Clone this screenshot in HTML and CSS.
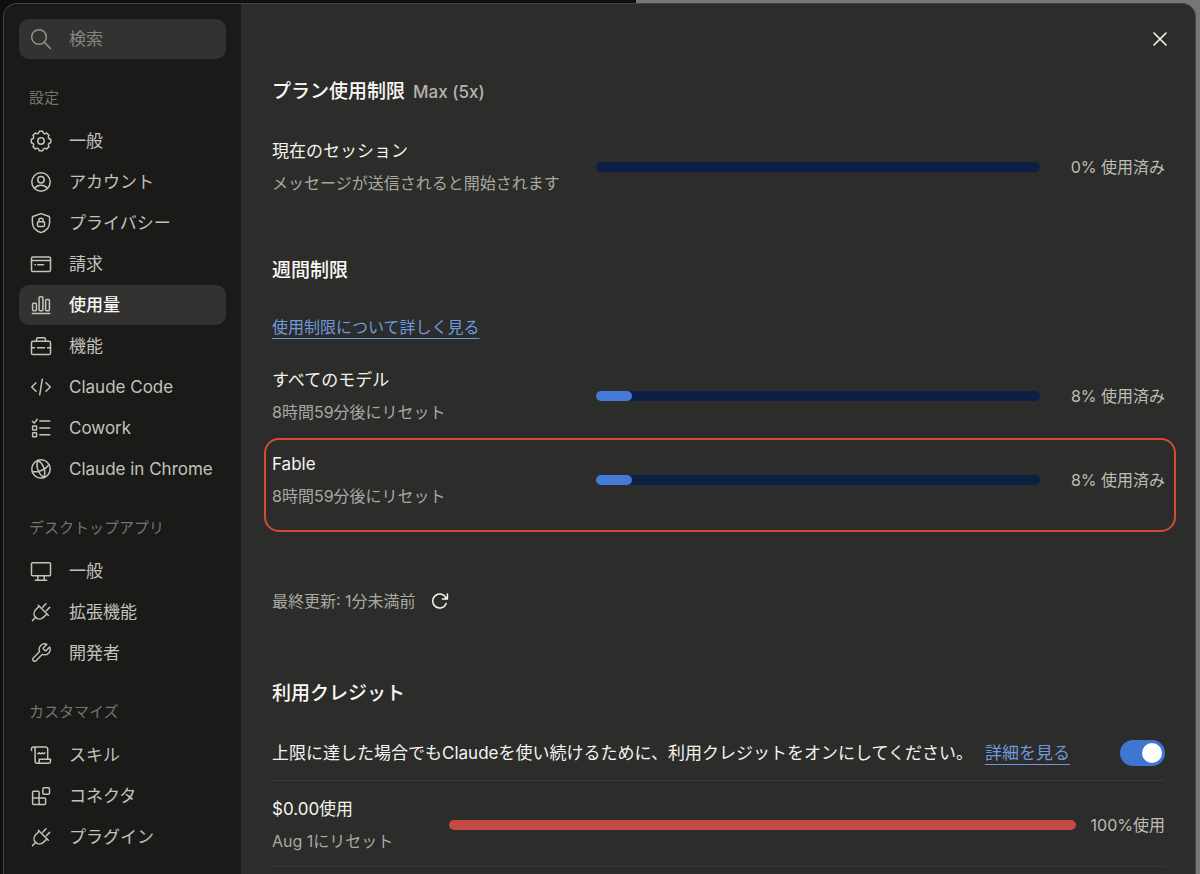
FILE: index.html
```html
<!DOCTYPE html>
<html lang="ja">
<head>
    <meta charset="UTF-8">
    <meta name="viewport" content="width=device-width, initial-scale=1.0">
    <title>設定 - 使用量</title>
    <link rel="stylesheet" href="styles.css">
</head>
<body>
    <svg class="sprite" aria-hidden="true">
        <symbol id="plug" viewBox="0 0 22 22">
            <path d="M8.3 4.2L18.3 14.2M12.7 6.2L16 2.8M16.3 9.8L19.7 6.4M9.2 5.2L5.6 8.7C3.5 11 3.5 14.3 5.6 16.4C7.7 18.5 11 18.5 13.3 16.4L17 13M5.6 16.4L2.5 19.6"/>
        </symbol>
    </svg>

    <div class="dialog" role="dialog" aria-label="設定">
        <nav class="sidebar">
            <label class="search">
                <svg class="icon" viewBox="0 0 22 22"><circle cx="9" cy="9" r="7.3"/><path d="M14.3 14.3L20.5 20.5"/></svg>
                <input type="search" placeholder="検索" aria-label="検索">
            </label>

            <h3 class="nav-label">設定</h3>
            <div class="nav-group">
                <a href="#" class="nav-item">
                    <svg class="icon" viewBox="0 0 22 22"><path d="M9.3 1.3H12.7Q13.2 3.3 14.1 3.6Q15.2 3.9 16.6 3L19 5.4Q18 6.9 18.4 7.9Q18.8 8.9 20.7 9.3V12.7Q18.8 13.1 18.4 14.1Q18 15.1 19 16.6L16.6 19Q15.2 18.1 14.1 18.4Q13.2 18.8 12.7 20.7H9.3Q8.8 18.8 7.9 18.4Q6.8 18.1 5.4 19L3 16.6Q4 15.1 3.6 14.1Q3.2 13.1 1.3 12.7V9.3Q3.2 8.9 3.6 7.9Q4 6.9 3 5.4L5.4 3Q6.8 3.9 7.9 3.6Q8.8 3.3 9.3 1.3Z"/><circle cx="11" cy="11" r="3.2"/></svg>
                    一般
                </a>
                <a href="#" class="nav-item">
                    <svg class="icon" viewBox="0 0 22 22"><circle cx="11" cy="11" r="9.2"/><circle cx="11" cy="8.7" r="3.2"/><path d="M4.6 17.3Q7 14.3 11 14.3T17.4 17.3"/></svg>
                    アカウント
                </a>
                <a href="#" class="nav-item">
                    <svg class="icon" viewBox="0 0 22 22"><path d="M11 1.6L18.6 4.2Q19.6 4.6 19.6 5.6V10.5C19.6 15.5 16.5 18.8 11 20.6C5.5 18.8 2.4 15.5 2.4 10.5V5.6Q2.4 4.6 3.4 4.2Z"/><rect x="7.5" y="9.8" width="7" height="4.8" rx="1"/><path d="M8.9 9.8V8.4A2.1 2.1 0 0 1 13.1 8.4V9.8"/></svg>
                    プライバシー
                </a>
                <a href="#" class="nav-item">
                    <svg class="icon" viewBox="0 0 22 22"><rect x="1.5" y="4" width="19" height="14.6" rx="1.3"/><path d="M1.5 7.4H20.5M4.9 11.7H5.4M7.7 11.7H13.5"/></svg>
                    請求
                </a>
                <a href="#" class="nav-item active" aria-current="page">
                    <svg class="icon" viewBox="0 0 22 22"><rect x="2.6" y="9.3" width="3.8" height="7.4" rx="1"/><rect x="9.1" y="2.7" width="3.8" height="14" rx="1"/><rect x="15.6" y="5.4" width="3.8" height="11.3" rx="1"/><path d="M2.3 19.5H19.8"/></svg>
                    使用量
                </a>
                <a href="#" class="nav-item">
                    <svg class="icon" viewBox="0 0 22 22"><rect x="1.5" y="6.3" width="19" height="13.2" rx="1.6"/><path d="M6.5 6.3V4.3Q6.5 2.8 8 2.8H14Q15.5 2.8 15.5 4.3V6.3M1.5 12.7H4.5M7.5 12.7H14.5M17.5 12.7H20.5"/></svg>
                    機能
                </a>
                <a href="#" class="nav-item">
                    <svg class="icon" viewBox="0 0 22 22"><path d="M6 6.7L1.7 11L6 15.3M12.3 3.2L9.7 18.8M16 6.7L20.3 11L16 15.3"/></svg>
                    Claude Code
                </a>
                <a href="#" class="nav-item">
                    <svg class="icon" viewBox="0 0 22 22"><path d="M2.4 4.4L4.3 6L7.3 2.3M9.8 4H19.8M9.8 11H19.8M9.8 17.8H19.8"/><rect x="2.6" y="9" width="4" height="4" rx=".6"/><rect x="2.6" y="15.8" width="4" height="4" rx=".6"/></svg>
                    Cowork
                </a>
                <a href="#" class="nav-item">
                    <svg class="icon" viewBox="0 0 22 22"><circle cx="11" cy="11" r="9.2"/><path d="M8 2.3C5.5 7.5 8 15.5 13.8 19.7M8 2.3C13.5 5.5 16.5 13.5 13.8 19.7M2.2 13.5C8 14.5 15.5 12 19 6.6" /></svg>
                    Claude in Chrome
                </a>
            </div>

            <h3 class="nav-label">デスクトップアプリ</h3>
            <div class="nav-group">
                <a href="#" class="nav-item">
                    <svg class="icon" viewBox="0 0 22 22"><rect x="1.5" y="2.7" width="19" height="13" rx="1"/><path d="M7.8 15.7V20.3M14.2 15.7V20.3M5.3 20.3H16.7"/></svg>
                    一般
                </a>
                <a href="#" class="nav-item">
                    <svg class="icon"><use href="#plug"/></svg>
                    拡張機能
                </a>
                <a href="#" class="nav-item">
                    <svg class="icon" viewBox="0 0 24 24"><path d="M14.7 6.3a1 1 0 0 0 0 1.4l1.6 1.6a1 1 0 0 0 1.4 0l3.77-3.77a6 6 0 0 1-7.94 7.94l-6.91 6.91a2.12 2.12 0 0 1-3-3l6.91-6.91a6 6 0 0 1 7.94-7.94l-3.76 3.76z"/></svg>
                    開発者
                </a>
            </div>

            <h3 class="nav-label">カスタマイズ</h3>
            <div class="nav-group">
                <a href="#" class="nav-item">
                    <svg class="icon" viewBox="0 0 22 22"><path d="M1.5 6.5V4.8A1.8 1.8 0 0 1 3.3 3H15.7A2 2 0 0 1 17.7 5V15M3.3 3A1.8 1.8 0 0 1 5.1 4.8V17.3A2 2 0 0 0 7.1 19.3H18.5A2 2 0 0 0 20.5 17.3V15.3H9.2V17.2A2.1 2.1 0 0 1 7.1 19.3M7.8 9.8L9.3 8.8L10.6 9.8L12.1 8.8L13.4 9.8L14.9 8.8"/></svg>
                    スキル
                </a>
                <a href="#" class="nav-item">
                    <svg class="icon" viewBox="0 0 22 22"><path d="M2.6 7.2Q2.6 6.2 3.6 6.2H8.1Q9.1 6.2 9.1 7.2V19.5M2.6 7.2V18.5Q2.6 19.5 3.6 19.5H14.6Q15.6 19.5 15.6 18.5V13.9Q15.6 12.9 14.6 12.9H2.6"/><rect x="12.9" y="2.7" width="6.6" height="6.6" rx="1"/></svg>
                    コネクタ
                </a>
                <a href="#" class="nav-item">
                    <svg class="icon"><use href="#plug"/></svg>
                    プラグイン
                </a>
            </div>
        </nav>

        <main class="main">
            <div class="main-header">
                <button type="button" class="close-btn" aria-label="閉じる">
                    <svg viewBox="0 0 14 14" width="14" height="14"><path d="M1 1L13 13M13 1L1 13"/></svg>
                </button>
            </div>

            <div class="content">
                <section class="plan">
                    <h2>プラン使用制限 <span class="plan-name">Max (5x)</span></h2>
                    <div class="usage-row">
                        <div class="usage-info">
                            <div class="title">現在のセッション</div>
                            <div class="sub">メッセージが送信されると開始されます</div>
                        </div>
                        <div class="bar" role="progressbar" aria-valuenow="0" aria-label="現在のセッション"></div>
                        <div class="percent">0% 使用済み</div>
                    </div>
                </section>

                <section class="weekly">
                    <h2>週間制限</h2>
                    <p class="learn-more"><a href="#" class="link">使用制限について詳しく見る</a></p>
                    <div class="usage-row">
                        <div class="usage-info">
                            <div class="title">すべてのモデル</div>
                            <div class="sub">8時間59分後にリセット</div>
                        </div>
                        <div class="bar" role="progressbar" aria-valuenow="8" aria-label="すべてのモデル">
                            <div class="bar-fill" style="width: 8%;"></div>
                        </div>
                        <div class="percent">8% 使用済み</div>
                    </div>
                    <div class="usage-row highlight">
                        <div class="usage-info">
                            <div class="title">Fable</div>
                            <div class="sub">8時間59分後にリセット</div>
                        </div>
                        <div class="bar" role="progressbar" aria-valuenow="8" aria-label="Fable">
                            <div class="bar-fill" style="width: 8%;"></div>
                        </div>
                        <div class="percent">8% 使用済み</div>
                    </div>
                    <div class="updated">
                        <span>最終更新: 1分未満前</span>
                        <button type="button" class="refresh-btn" aria-label="更新">
                            <svg viewBox="0 0 18 18" width="18" height="18"><path d="M15.2 11.5A7 7 0 1 1 14.8 5.6L16.2 7M16.4 2V7H11.4"/></svg>
                        </button>
                    </div>
                </section>

                <section class="credits">
                    <h2>利用クレジット</h2>
                    <div class="credit-toggle">
                        <p><label for="credits">上限に達した場合でもClaudeを使い続けるために、利用クレジットをオンにしてください。</label><a href="#" class="link">詳細を見る</a></p>
                        <input type="checkbox" class="toggle" id="credits" checked>
                    </div>
                    <div class="usage-row credit-row">
                        <div class="usage-info">
                            <div class="title">$0.00使用</div>
                            <div class="sub">Aug 1にリセット</div>
                        </div>
                        <div class="bar" role="progressbar" aria-valuenow="100" aria-label="利用クレジット">
                            <div class="bar-fill danger" style="width: 100%;"></div>
                        </div>
                        <div class="percent">100%使用</div>
                    </div>
                </section>
            </div>
        </main>
    </div>
</body>
</html>
```

FILE: styles.css
```css
* {
    box-sizing: border-box;
}
body {
    margin: 0;
    min-height: 100vh;
    padding: 3px 4px 0 3px;
    background: linear-gradient(to right, #0f0f0f 53%, #777776 53%);
    color: #F5F4EF;
    font-family: Inter, "Noto Sans CJK JP", sans-serif;
    font-size: 17px;
    line-height: 24px;
}
h2, h3, p {
    margin: 0;
}
.sprite {
    display: none;
}
.dialog {
    display: flex;
    min-height: calc(100vh - 3px);
    background: #2C2C2B;
    border: 1px solid #444443;
    border-bottom: none;
    border-radius: 14px 14px 0 0;
    overflow: hidden;
}

/* Sidebar */
.sidebar {
    flex: none;
    width: 238px;
    padding: 15px 15px 0;
    background: #1A1A19;
    border-right: 1px solid #30302F;
}
.search {
    display: flex;
    align-items: center;
    gap: 17px;
    height: 40px;
    padding: 0 11px;
    background: #323231;
    border-radius: 10px;
    color: #93928D;
}
.search input {
    flex: 1;
    min-width: 0;
    padding: 0;
    background: none;
    border: none;
    outline: none;
    color: #F5F4EF;
    font: inherit;
}
.search input::placeholder {
    color: #85847F;
    opacity: 1;
}
.nav-label {
    margin: 29px 0 13px;
    padding-left: 10px;
    color: #75746F;
    font-size: 15px;
    font-weight: 400;
    line-height: 20px;
}
.nav-group {
    display: flex;
    flex-direction: column;
    gap: 1px;
}
.nav-item {
    display: flex;
    align-items: center;
    gap: 17px;
    height: 40px;
    padding: 0 11px;
    border-radius: 10px;
    color: #C3C2BB;
    text-decoration: none;
    white-space: nowrap;
}
.nav-item:hover {
    background: #262625;
}
.nav-item.active {
    background: #323231;
    color: #FAF9F5;
    font-weight: 500;
}
.nav-item.active .icon {
    color: #C3C2BB;
}
.icon {
    flex: none;
    width: 22px;
    height: 22px;
    fill: none;
    stroke: currentColor;
    stroke-width: 1.5;
    stroke-linecap: round;
    stroke-linejoin: round;
}

/* Main */
.main {
    flex: 1;
    min-width: 0;
}
.main-header {
    display: flex;
    justify-content: flex-end;
    padding: 20px 20px 0;
}
.close-btn,
.refresh-btn {
    display: flex;
    align-items: center;
    justify-content: center;
    padding: 0;
    background: none;
    border: none;
    color: #F5F4EF;
    cursor: pointer;
}
.close-btn {
    width: 30px;
    height: 30px;
}
.close-btn svg,
.refresh-btn svg {
    fill: none;
    stroke: currentColor;
    stroke-width: 1.6;
    stroke-linecap: round;
    stroke-linejoin: round;
}
.content {
    padding: 24px 30px 0;
}
h2 {
    color: #FAF9F5;
    font-size: 19px;
    font-weight: 500;
    line-height: 28px;
}
.plan-name {
    margin-left: 3px;
    color: #B5B4AD;
    font-size: 17px;
}
.usage-row {
    display: grid;
    grid-template-columns: 324px 1fr 125px;
    align-items: center;
}
.title {
    color: #F5F4EF;
}
.sub {
    margin-top: 9px;
    color: #A9A8A1;
    font-size: 16px;
    line-height: 22px;
}
.percent {
    color: #BDBCB5;
    font-size: 16px;
    line-height: 22px;
    text-align: right;
    white-space: nowrap;
}
.bar {
    height: 10px;
    background: #0C2046;
    border-radius: 5px;
}
.bar-fill {
    height: 100%;
    background: #447AD6;
    border-radius: 5px;
}
.bar-fill.danger {
    background: #C34B44;
}
.plan .usage-row {
    margin-top: 33px;
}
.weekly {
    margin-top: 63px;
}
.learn-more {
    margin: 30px 0 29px;
    font-size: 16px;
}
.link {
    color: #6E99DE;
    text-decoration: underline 1px;
    text-underline-offset: 5px;
}
.highlight {
    margin: 15px -11px 0 -8px;
    padding: 12px 9px 23px 6px;
    border: 2px solid #D54B32;
    border-radius: 15px;
}
.updated {
    display: flex;
    align-items: center;
    gap: 15px;
    margin-top: 57px;
    color: #A9A8A1;
    font-size: 16px;
}
.credits {
    margin-top: 67px;
}
.credit-toggle {
    display: flex;
    align-items: center;
    justify-content: space-between;
    margin-top: 32px;
    padding-bottom: 14px;
    border-bottom: 1px solid #3A3A38;
}
.credit-toggle .link {
    margin-left: 12px;
}
.toggle {
    flex: none;
    display: flex;
    align-items: center;
    justify-content: flex-end;
    width: 45px;
    height: 26px;
    margin: 0;
    padding: 0 3px;
    appearance: none;
    background: #5A5A58;
    border-radius: 13px;
    cursor: pointer;
}
.toggle::before {
    content: "";
    width: 20px;
    height: 20px;
    background: #FFFFFF;
    border-radius: 50%;
}
.toggle:checked {
    background: #3E76D3;
}
.toggle:not(:checked) {
    justify-content: flex-start;
}
.credit-row {
    grid-template-columns: 177px 1fr 89px;
    padding: 16px 0 14px;
    border-bottom: 1px solid #3A3A38;
}
```
